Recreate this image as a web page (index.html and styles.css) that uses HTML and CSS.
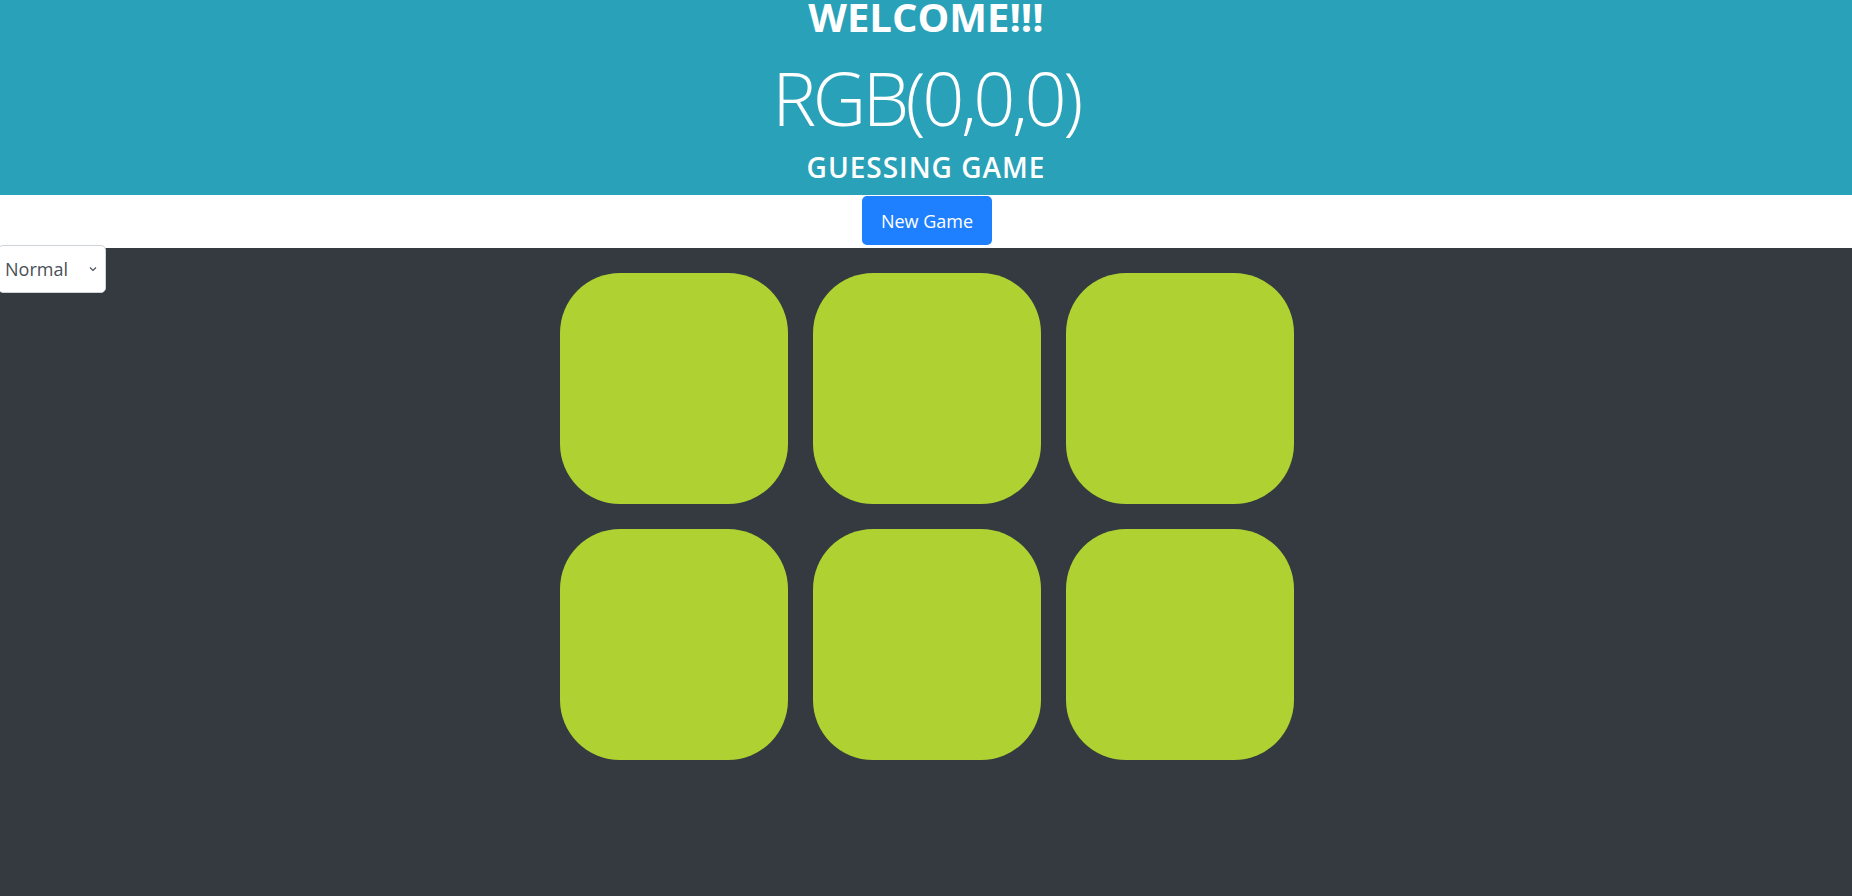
FILE: index.html
```html
<!DOCTYPE html>
<html>
<head>
<meta charset="utf-8">
<link rel="stylesheet" href="styles.css">
</head>
<body>
<header class="banner">
  <h1 class="welcome">WELCOME!!!</h1>
  <div class="rgb">RGB(0,0,0)</div>
  <h3 class="subtitle">GUESSING GAME</h3>
</header>
<div class="controls">
  <button class="new-game">New Game</button>
  <div class="mode-select">
    <span class="mode-label">Normal</span>
    <svg class="chev" width="8" height="6" viewBox="0 0 8 6"><path d="M1 1.5 L4 4.5 L7 1.5" fill="none" stroke="#495057" stroke-width="1.2"/></svg>
  </div>
</div>
<main class="board">
  <div class="grid">
    <div class="square"></div>
    <div class="square"></div>
    <div class="square"></div>
    <div class="square"></div>
    <div class="square"></div>
    <div class="square"></div>
  </div>
</main>
</body>
</html>
```
FILE: styles.css
```css
html, body {
  margin: 0;
  padding: 0;
  height: 100%;
}
body {
  font-family: "Open Sans", "Noto Sans", sans-serif;
  background: #343a40;
  display: flex;
  flex-direction: column;
  overflow: hidden;
}
.banner {
  background: #29a1b8;
  color: #fff;
  text-align: center;
  height: 195px;
  box-sizing: border-box;
}
.welcome {
  margin: 0;
  font-size: 40px;
  line-height: 34px;
  font-weight: 700;
}
.rgb {
  margin-top: 24px;
  font-size: 74px;
  line-height: 80px;
  font-weight: 300;
  letter-spacing: -3.5px;
}
.subtitle {
  margin: 12px 0 0;
  font-size: 28px;
  line-height: 34px;
  font-weight: 600;
  letter-spacing: 1px;
}
.controls {
  position: relative;
  background: #fff;
  height: 53px;
  display: flex;
  justify-content: center;
  align-items: flex-start;
  padding-left: 2px;
}
.new-game {
  margin-top: 1px;
  height: 49px;
  width: 130px;
  border: none;
  border-radius: 5px;
  background: #1f80ff;
  color: #fff;
  font-family: "Open Sans", "Noto Sans", sans-serif;
  font-size: 18px;
  padding: 0;
}
.mode-select {
  position: absolute;
  left: -2px;
  top: 50px;
  width: 108px;
  height: 48px;
  box-sizing: border-box;
  background: #fff;
  border: 1px solid #ced4da;
  border-radius: 5px;
  display: flex;
  align-items: center;
  justify-content: space-between;
  padding: 0 8px 0 6px;
  z-index: 2;
}
.mode-label {
  font-size: 18px;
  color: #495057;
}
.board {
  flex: 1;
  padding-top: 25px;
  padding-left: 2px;
}
.grid {
  display: grid;
  grid-template-columns: repeat(3, 228px);
  grid-auto-rows: 231px;
  column-gap: 25px;
  row-gap: 25px;
  justify-content: center;
}
.square {
  background: #afd132;
  border-radius: 60px;
}
```
